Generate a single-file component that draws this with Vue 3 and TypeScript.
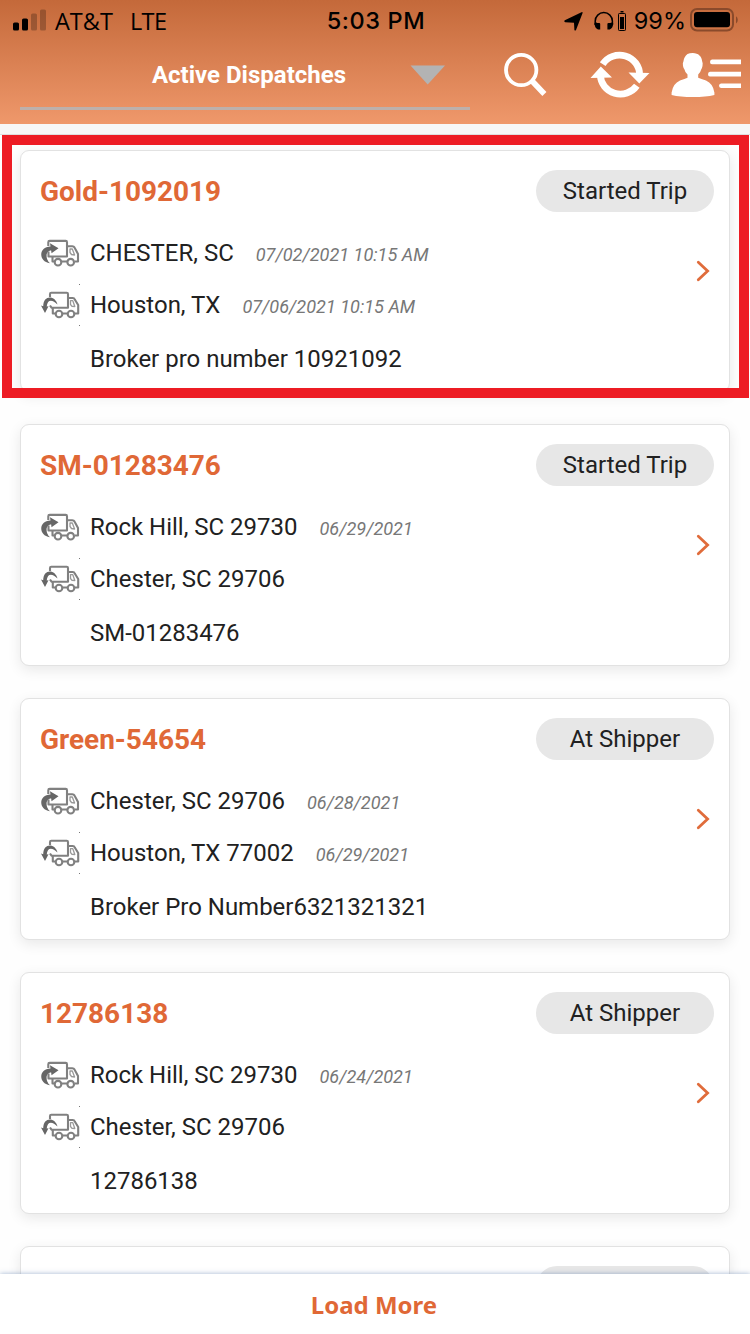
<script setup lang="ts">
interface Stop {
  place: string
  time?: string
}

interface Dispatch {
  title: string
  status: string
  pickup: Stop
  delivery: Stop
  reference: string
}

const dispatches: Dispatch[] = [
  {
    title: 'Gold-1092019',
    status: 'Started Trip',
    pickup: { place: 'CHESTER, SC', time: '07/02/2021 10:15 AM' },
    delivery: { place: 'Houston, TX', time: '07/06/2021 10:15 AM' },
    reference: 'Broker pro number 10921092',
  },
  {
    title: 'SM-01283476',
    status: 'Started Trip',
    pickup: { place: 'Rock Hill, SC 29730', time: '06/29/2021' },
    delivery: { place: 'Chester, SC 29706' },
    reference: 'SM-01283476',
  },
  {
    title: 'Green-54654',
    status: 'At Shipper',
    pickup: { place: 'Chester, SC 29706', time: '06/28/2021' },
    delivery: { place: 'Houston, TX 77002', time: '06/29/2021' },
    reference: 'Broker Pro Number6321321321',
  },
  {
    title: '12786138',
    status: 'At Shipper',
    pickup: { place: 'Rock Hill, SC 29730', time: '06/24/2021' },
    delivery: { place: 'Chester, SC 29706' },
    reference: '12786138',
  },
]
</script>

<template>
  <div class="screen">
    <header class="header">
      <div class="status">
        <div class="status-left">
          <svg class="signal" width="34" height="22" viewBox="0 0 34 22">
            <rect x="0" y="13.5" width="6" height="8" rx="1.6" />
            <rect x="9" y="9.5" width="6" height="12" rx="1.6" />
            <rect class="dim" x="18" y="4.5" width="6" height="17" rx="1.6" />
            <rect class="dim" x="27" y="0.5" width="6" height="21" rx="1.6" />
          </svg>
          <span class="carrier">AT&amp;T</span>
          <span class="network">LTE</span>
        </div>
        <div class="clock">5:03 PM</div>
        <div class="status-right">
          <svg width="19" height="20" viewBox="0 0 19 20">
            <path d="M.8 9.300 17.500 1.200Q19 .8 18.500 2.200L12 19Q11.200 20 10.400 19L10 11.800 1.200 11.200Q-.4 10.400.8 9.300Z" />
          </svg>
          <svg class="phones" width="20" height="20" viewBox="0 0 20 20">
            <path d="M1.200 14V10.200A8.600 8.600 0 0 1 18.400 10.200V14" fill="none" stroke="#000" stroke-width="1.500" />
            <path d="M.5 12Q3 11 3.200 12H5.200Q6.200 12 6.200 13V18.500H4Q.5 17 .5 12ZM19.200 12Q16.700 11 16.500 12H14.500Q13.400 12 13.400 13V18.500H15.700Q19.200 17 19.200 12Z" />
          </svg>
          <svg class="mini" width="8" height="20" viewBox="0 0 8 20">
            <rect x=".5" y="2.500" width="7" height="17" rx=".8" fill="none" stroke="#000" />
            <path d="M2.500 0h3v1.600h-3zM2 6h4v12H2z" />
          </svg>
          <span class="percent">99%</span>
          <svg class="battery" width="49" height="24" viewBox="0 0 49 24">
            <rect class="shell" x="1" y="1" width="42" height="21.500" rx="6" />
            <rect x="4" y="4" width="36" height="15.300" rx="3" />
            <path class="dim-cap" d="M46 8.200q1.800 1 1.800 3.600t-1.800 3.600z" />
          </svg>
        </div>
      </div>
      <div class="toolbar">
        <div class="select">
          <span class="select-label">Active Dispatches</span>
          <svg class="caret" width="36" height="20" viewBox="0 0 36 20">
            <path d="M.5.5H35L17.700 19.500Z" />
          </svg>
        </div>
        <svg class="search" width="44" height="46" viewBox="0 0 44 46">
          <circle cx="18.200" cy="18" r="15.200" fill="none" stroke="#fff" stroke-width="3.800" />
          <path d="M28.600 28.500 41.400 42" stroke="#fff" stroke-width="5.600" />
        </svg>
        <svg class="refresh" width="60" height="50" viewBox="0 0 60 50">
          <g fill="none" stroke="#fff" stroke-width="6.800">
            <path d="M12.700 14.200A20 19.500 0 0 1 49.600 25" />
            <path d="M46.800 35.800A20 19.500 0 0 1 10.400 25" />
          </g>
          <path fill="#fff" d="M38.500 22.500 59.500 23 49.300 33.400ZM.5 28 10.800 16.600 22 27.500Z" />
        </svg>
        <svg class="account" width="70" height="46" viewBox="0 0 70 46">
          <path d="M21.800 1C27.500 1 30.700 4.500 31.200 9.500Q32 10.500 31.500 14Q31 16.500 30.200 17.500Q29.500 20.500 27.200 22.500V25.700Q30 27 35 28.500Q42 31.500 43.400 40.500V43Q35 45 22 45T.6 43V40.500Q2 31.500 9 28.500Q14 27 16.500 25.700V22.500Q14 20.500 13.500 17.500Q12.500 16.500 12 14Q11.500 10.500 12.400 9.500Q13 4.500 16.500 2Q18.500 1 21.800 1Z" />
          <path d="M41 7.500h29v4.800H41q-2-.2-2-2.400t2-2.400zM39 19.800h31v4.800H39q-2-.2-2-2.400t2-2.400zM50 31.500h20v4.500H50q-2-.2-2-2.200t2-2.300z" />
        </svg>
      </div>
    </header>

    <div class="strip"></div>

    <main class="list">
      <article v-for="item in dispatches" :key="item.title" class="card">
        <div class="card-head">
          <h2 class="title">{{ item.title }}</h2>
          <span class="badge">{{ item.status }}</span>
        </div>
        <div class="stop">
          <svg class="truck" width="40" height="40" viewBox="0 0 40 40">
            <g class="outline">
              <path d="M8.300 13V9.200Q8.300 7.900 9.700 7.900H25.700Q27 7.900 27 9.200V23.500H8.500V18.500" />
              <path d="M27.500 13.200H32.300Q33.900 13.200 34.500 14.500L38 21V28.500H34.800M14.500 28.500H12.500V24M22 28.500H27" />
              <path d="M30 16H32.300L34.600 22L31.500 21.500L30 19.500Z" class="thin" />
              <circle cx="18" cy="29.200" r="3.300" />
              <circle cx="30.700" cy="29.200" r="3.300" />
            </g>
            <path class="arrow" d="M10 30.200C-2 28.500-1.500 13.500 10.500 13.500L10 10.300 18.500 15.300 11.500 20.300 11.200 17.500C5.500 17.500 5 26 10 30.200Z" />
          </svg>
          <span class="place">{{ item.pickup.place }}</span>
          <span v-if="item.pickup.time" class="time">{{ item.pickup.time }}</span>
        </div>
        <div class="stop">
          <svg class="truck" width="40" height="42" viewBox="0 -1 40 42">
            <g class="outline">
              <path d="M10 12V9Q10 7.700 11.300 7.700H26.700Q28 7.700 28 9V22.700H11.500L10 20.500" />
              <path d="M28.300 13H32.700Q34.300 13 34.800 14.500L38.200 20V28.500H35M15.500 28.500H12.800V23M23 28.500H27.500" />
              <path d="M30.500 15.700H32.800L34.800 21.500L32 21.300L30.500 19.500Z" class="thin" />
              <circle cx="19" cy="29" r="3.300" />
              <circle cx="31" cy="29" r="3.300" />
            </g>
            <path class="arrow" d="M17.500 19.500C15.500 10.500 3.500 9 3.200 21.200L1 20.500 5 28 8.500 21.300 6.700 21.500C7.500 14 12.500 14.500 17.500 19.500Z" />
            <path class="dot" d="M39 -1h1v1h-1zM39 40h1v1h-1z" />
          </svg>
          <span class="place">{{ item.delivery.place }}</span>
          <span v-if="item.delivery.time" class="time">{{ item.delivery.time }}</span>
        </div>
        <p class="reference">{{ item.reference }}</p>
        <svg class="chevron" width="14" height="22" viewBox="0 0 14 22">
          <path d="M2.300 2.300 11.600 11 2.300 19.700" />
        </svg>
      </article>
      <article class="card">
        <div class="card-head"><span class="badge"></span></div>
      </article>
      <div class="highlight"></div>
    </main>

    <footer class="footer">Load More</footer>
  </div>
</template>

<style>
html,
body {
  margin: 0;
  overflow: hidden;
}
</style>

<style scoped>
.screen {
  box-sizing: border-box;
  width: 750px;
  height: 1334px;
  display: flex;
  flex-direction: column;
  overflow: hidden;
  background: #fefefe;
  color: #212121;
  font-family: Roboto, "Liberation Sans", sans-serif;
}

.header {
  flex: none;
  height: 124px;
  background: linear-gradient(#c4693a, #ef986b);
}

.status {
  display: grid;
  grid-template-columns: 1fr auto 1fr;
  align-items: center;
  height: 40px;
  box-sizing: border-box;
  padding: 0 11px 0 13px;
  color: #000;
  font-family: Inter, "Liberation Sans", sans-serif;
  font-size: 23.500px;
  line-height: 40px;
}

.status-left,
.status-right {
  display: flex;
  align-items: center;
  height: 40px;
}

.status-right {
  justify-content: flex-end;
}

.signal {
  margin-top: -2px;
}

.dim {
  opacity: 0.24;
}

.carrier {
  margin-left: 8px;
  font-family: "Open Sans", sans-serif;
}

.network {
  margin-left: 17px;
  font-family: "Open Sans", sans-serif;
  letter-spacing: -0.600px;
}

.clock {
  padding-top: 1px;
  font-weight: 500;
  letter-spacing: 0.600px;
}

.phones {
  margin-left: 11px;
}

.mini {
  margin-left: 4px;
}

.percent {
  margin-left: 8px;
  padding-top: 1px;
}

.battery {
  margin-left: 4px;
  margin-top: -1px;
}

.shell {
  fill: none;
  stroke: #8a4a2b;
  stroke-width: 2;
}

.dim-cap {
  fill: #8a4a2b;
}

.toolbar {
  display: flex;
  align-items: flex-start;
  padding-left: 20px;
}

.select {
  box-sizing: border-box;
  width: 450px;
  height: 70px;
  display: flex;
  justify-content: flex-end;
  border-bottom: 3px solid #bdb0ab;
}

.select-label {
  color: #fff;
  font-size: 24px;
  font-weight: 700;
  line-height: 70px;
}

.caret {
  margin: 25px 24px 0 64px;
  fill: #b3b3b3;
}

.search {
  margin: 12px 0 0 33px;
}

.refresh {
  margin: 10px 0 0 43px;
}

.account {
  margin: 12px 0 0 21px;
  fill: #fff;
}

.strip {
  flex: none;
  box-sizing: border-box;
  height: 11px;
  background: #f7f7f7;
  border-bottom: 1px solid #dedede;
}

.list {
  position: relative;
  flex: none;
  height: 1139px;
  box-sizing: border-box;
  padding: 15px 20px 0;
  display: flex;
  flex-direction: column;
  gap: 32px;
  overflow: hidden;
}

.card {
  position: relative;
  flex: none;
  box-sizing: border-box;
  height: 242px;
  padding: 19px 15px 0 19px;
  background: #fff;
  border: 1px solid #e2e2e2;
  border-radius: 9px;
  box-shadow: 0 4px 14px rgba(0, 0, 0, 0.09);
}

.card-head {
  display: flex;
  justify-content: space-between;
  height: 42px;
  margin-bottom: 15px;
}

.title {
  margin: 0;
  color: #e06836;
  font-size: 27.950px;
  font-weight: 700;
  line-height: 43px;
}

.badge {
  width: 178px;
  height: 42px;
  margin-left: auto;
  border-radius: 21px;
  background: #e7e7e7;
  font-size: 24px;
  line-height: 42px;
  text-align: center;
}

.stop {
  display: flex;
  align-items: center;
  height: 52px;
}

.truck {
  flex: none;
}

.outline {
  fill: none;
  stroke: #808080;
  stroke-width: 2.100;
  stroke-linejoin: round;
}

.thin {
  stroke: #999;
  stroke-width: 1.300;
}

.arrow {
  fill: #666;
}

.dot {
  fill: #777;
}

.place {
  margin-left: 10px;
  font-size: 23.970px;
  line-height: 52px;
}

.time {
  margin-left: 22px;
  padding-top: 2px;
  color: #777;
  font-size: 18.100px;
  font-style: italic;
}

.reference {
  margin: 2px 0 0 50px;
  font-size: 23.970px;
  line-height: 52px;
}

.chevron {
  position: absolute;
  right: 19px;
  top: 109px;
  fill: none;
  stroke: #e06c3b;
  stroke-width: 2.800;
  stroke-linecap: round;
}

.highlight {
  position: absolute;
  box-sizing: border-box;
  left: 2px;
  top: 0;
  width: 747px;
  height: 263px;
  border: 10px solid #ed1c24;
}

.footer {
  position: relative;
  flex: none;
  box-sizing: border-box;
  height: 60px;
  padding-right: 2px;
  background: #fff;
  box-shadow: 0 0 5px rgba(70, 110, 165, 0.5);
  color: #e06836;
  font-family: "Noto Sans", "Open Sans", sans-serif;
  font-size: 24px;
  font-weight: 700;
  line-height: 61px;
  text-align: center;
}
</style>
